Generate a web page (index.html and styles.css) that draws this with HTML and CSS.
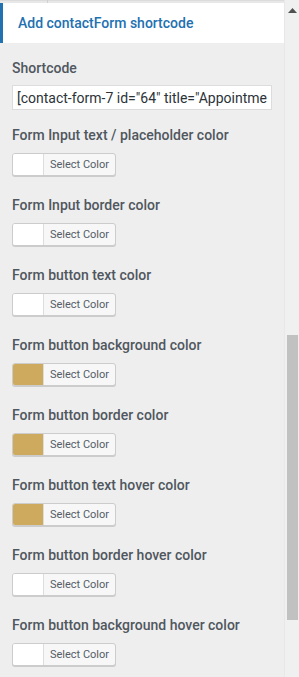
FILE: index.html
```html
<!DOCTYPE html>
<html>
<head>
<meta charset="utf-8">
<link rel="stylesheet" href="styles.css">
</head>
<body>
<div class="frame">
  <div class="panel">
    <div class="topstrip"><span class="divider"></span></div>
    <div class="section-title">Add contactForm shortcode</div>
    <div class="controls">
      <div class="control">
        <label class="label">Shortcode</label>
        <input class="text-input" type="text" value="[contact-form-7 id=&quot;64&quot; title=&quot;Appointment form&quot;]">
      </div>
      <div class="control color">
        <label class="label">Form Input text / placeholder color</label>
        <button class="color-btn"><span class="swatch"></span><span class="btn-text">Select Color</span></button>
      </div>
      <div class="control color">
        <label class="label">Form Input border color</label>
        <button class="color-btn"><span class="swatch"></span><span class="btn-text">Select Color</span></button>
      </div>
      <div class="control color">
        <label class="label">Form button text color</label>
        <button class="color-btn"><span class="swatch"></span><span class="btn-text">Select Color</span></button>
      </div>
      <div class="control color">
        <label class="label">Form button background color</label>
        <button class="color-btn"><span class="swatch gold"></span><span class="btn-text">Select Color</span></button>
      </div>
      <div class="control color">
        <label class="label">Form button border color</label>
        <button class="color-btn"><span class="swatch gold"></span><span class="btn-text">Select Color</span></button>
      </div>
      <div class="control color">
        <label class="label">Form button text hover color</label>
        <button class="color-btn"><span class="swatch gold"></span><span class="btn-text">Select Color</span></button>
      </div>
      <div class="control color">
        <label class="label">Form button border hover color</label>
        <button class="color-btn"><span class="swatch"></span><span class="btn-text">Select Color</span></button>
      </div>
      <div class="control color">
        <label class="label">Form button background hover color</label>
        <button class="color-btn"><span class="swatch"></span><span class="btn-text">Select Color</span></button>
      </div>
    </div>
  </div>
  <div class="scrollbar">
    <svg class="arrow" width="9" height="5" viewBox="0 0 9 5"><polygon points="0,5 9,5 4.5,0" fill="#505050"/></svg>
    <div class="track"><div class="thumb"></div></div>
  </div>
</div>
</body>
</html>
```
FILE: styles.css
```css
html, body {
  margin: 0;
  padding: 0;
  background: #eeeeee;
}
body {
  font-family: Roboto, "Liberation Sans", Arial, sans-serif;
  color: #50575e;
}
.frame {
  display: flex;
  width: 299px;
  height: 677px;
  overflow: hidden;
}
.panel {
  width: 284px;
  flex: none;
  background: #eeeeee;
}
.topstrip {
  height: 3px;
  background: #e8e8e8;
  border-top: 1px solid #dcdcdc;
  box-sizing: border-box;
  position: relative;
}
.divider {
  position: absolute;
  left: 47px;
  top: -1px;
  width: 1px;
  height: 3px;
  background: #d0d0d0;
}
.section-title {
  height: 40px;
  box-sizing: border-box;
  background: #ffffff;
  border-left: 3px solid #2271b1;
  padding-left: 15px;
  display: flex;
  align-items: center;
  font-size: 14px;
  font-weight: 500;
  color: #2271b1;
}
.controls {
  padding: 15px 12px 0 12px;
  display: flex;
  flex-direction: column;
}
.control {
  display: flex;
  flex-direction: column;
  align-items: flex-start;
}
.label {
  font-size: 14px;
  font-weight: 500;
  color: #50575e;
  line-height: 20px;
  height: 20px;
}
.text-input {
  margin-top: 7px;
  width: 260px;
  height: 25px;
  box-sizing: border-box;
  border: 1px solid #dcdcdc;
  background: #ffffff;
  padding: 0 4px;
  font-family: Roboto, "Liberation Sans", Arial, sans-serif;
  font-size: 14px;
  color: #2c3338;
  outline: none;
}
.control.color {
  margin-top: 19px;
}
.control.color:nth-child(2) {
  margin-top: 15px;
}
.color-btn {
  margin-top: 8px;
  display: flex;
  align-items: stretch;
  height: 23px;
  width: 104px;
  padding: 0;
  box-sizing: border-box;
  border: 1px solid #cccccc;
  border-radius: 3px;
  background: #f7f7f7;
  box-shadow: 0 1px 0 #cccccc;
  overflow: hidden;
  cursor: pointer;
}
.swatch {
  width: 30px;
  flex: none;
  background: #ffffff;
  border-right: 1px solid #dddddd;
}
.swatch.gold {
  background: #cdaa5d;
}
.btn-text {
  flex: 1;
  display: flex;
  align-items: center;
  justify-content: center;
  font-family: Roboto, "Liberation Sans", Arial, sans-serif;
  font-size: 11px;
  color: #555d66;
}
.scrollbar {
  width: 15px;
  flex: none;
  background: #f0f0f0;
  display: flex;
  flex-direction: column;
  align-items: center;
  border-left: 1px solid #e8e8e8;
  box-sizing: border-box;
}
.arrow {
  margin-top: 8px;
  flex: none;
}
.track {
  flex: 1;
  width: 100%;
  display: flex;
  flex-direction: column;
  align-items: center;
}
.thumb {
  margin-top: 322px;
  width: 11px;
  height: 285px;
  background: #c1c1c1;
}
```
